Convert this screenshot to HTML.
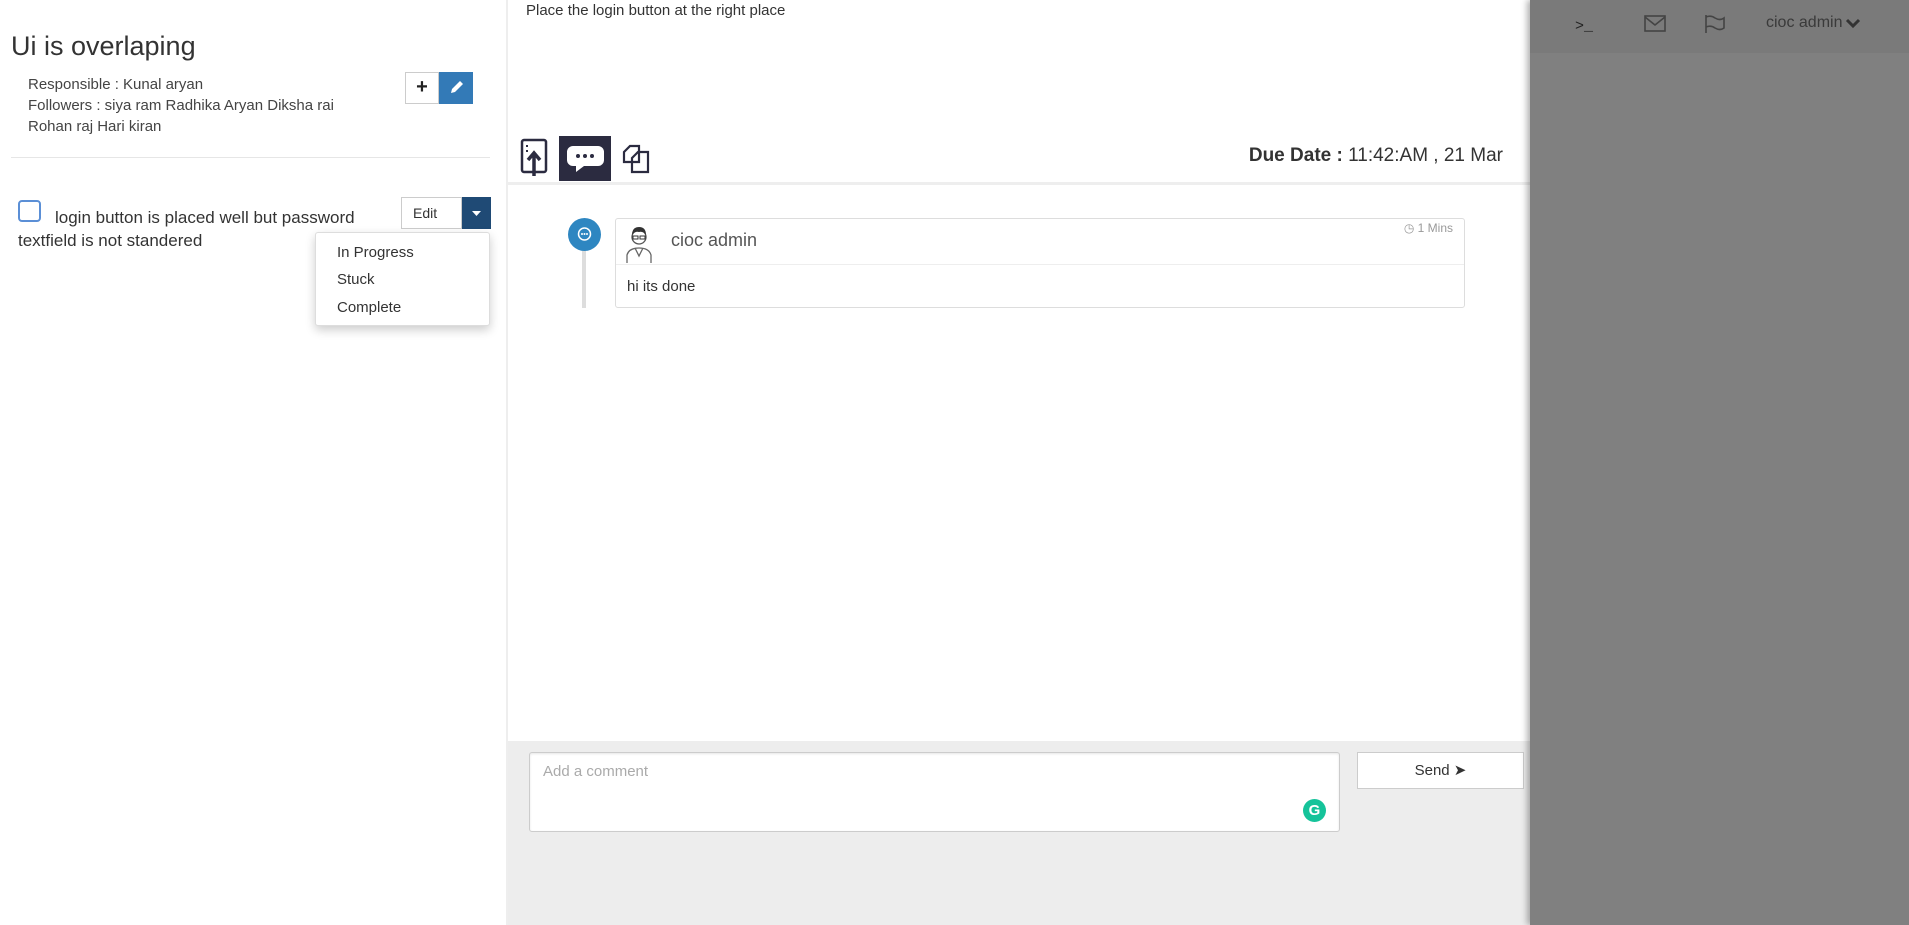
<!DOCTYPE html>
<html><head><meta charset="utf-8">
<style>
*{box-sizing:border-box;margin:0;padding:0}
body{width:1909px;height:925px;overflow:hidden;font-family:"Liberation Sans",sans-serif;background:#fff;position:relative;color:#333}
.abs{position:absolute}
</style></head><body>
<!-- left panel -->
<div class="abs" style="left:0;top:0;width:507px;height:925px;background:#fff"></div>
<div class="abs" style="left:11px;top:31px;font-size:27px;color:#333">Ui is overlaping</div>
<div class="abs" style="left:28px;top:74px;font-size:15px;line-height:21px;color:#444">Responsible : Kunal aryan<br>Followers : siya ram Radhika Aryan Diksha rai<br>Rohan raj Hari kiran</div>
<div class="abs" style="left:405px;top:72px;width:34px;height:32px;border:1px solid #ccc;background:#fff;text-align:center;font-size:20px;font-weight:bold;line-height:29px;color:#222">+</div>
<div class="abs" style="left:439px;top:72px;width:34px;height:32px;background:#337ab7;"><svg width="34" height="32"><path d="M12 21l1-4 8-8 3 3-8 8z" fill="#fff"/></svg></div>
<div class="abs" style="left:11px;top:157px;width:479px;height:1px;background:#e6e6e6"></div>
<div class="abs" style="left:18px;top:200px;width:23px;height:22px;border:2px solid #5b8fd6;border-radius:4px"></div>
<div class="abs" style="left:18px;top:206px;width:370px;font-size:17px;line-height:23px;color:#333;text-indent:37px">login button is placed well but password textfield is not standered</div>
<div class="abs" style="left:401px;top:197px;width:61px;height:32px;border:1px solid #ccc;background:#fff;font-size:14px;line-height:30px;padding-left:11px">Edit</div>
<div class="abs" style="left:462px;top:197px;width:29px;height:32px;background:#1f4a75"><svg width="29" height="32"><path d="M10 14h9l-4.5 5z" fill="#fff"/></svg></div>
<div class="abs" style="left:315px;top:232px;width:175px;height:94px;background:#fff;border:1px solid #ddd;border-radius:3px;box-shadow:0 4px 10px rgba(0,0,0,.2);font-size:15px;color:#333">
<div class="abs" style="left:21px;top:11px">In Progress</div>
<div class="abs" style="left:21px;top:38px">Stuck</div>
<div class="abs" style="left:21px;top:66px">Complete</div>
</div>
<div class="abs" style="left:506px;top:0;width:2px;height:925px;background:#eee"></div>
<!-- middle -->
<div class="abs" style="left:526px;top:2px;font-size:15px;color:#333">Place the login button at the right place</div>
<svg class="abs" style="left:518px;top:136px" width="140" height="46">
<rect x="4" y="4" width="24" height="32" rx="2" fill="none" stroke="#2b2b40" stroke-width="2.5"/>
<path d="M9 9v2M9 14v2" stroke="#2b2b40" stroke-width="2"/>
<path d="M16 40V18M10 24l6-7 6 7" stroke="#2b2b40" stroke-width="3.5" fill="none"/>
<rect x="41" y="0" width="52" height="45" fill="#2b2b40"/>
<path d="M55 10h25a6 6 0 0 1 6 6v8a6 6 0 0 1-6 6h-14l-8 6v-6h-3a6 6 0 0 1-6-6v-8a6 6 0 0 1 6-6z" fill="#fff"/>
<circle cx="60" cy="20" r="2" fill="#2b2b40"/><circle cx="67" cy="20" r="2" fill="#2b2b40"/><circle cx="74" cy="20" r="2" fill="#2b2b40"/>
<path d="M106 16l6-6h9v16h-15z M114 22l6-6h10v20h-16z" fill="#fff" stroke="#2b2b40" stroke-width="2.2"/>
</svg>
<div class="abs" style="right:406px;top:145px;font-size:19px;color:#333"><b>Due Date :</b> 11:42:AM , 21 Mar</div>
<div class="abs" style="left:508px;top:182px;width:1022px;height:3px;background:#eee"></div>
<div class="abs" style="left:582px;top:245px;width:4px;height:63px;background:#ddd"></div>
<div class="abs" style="left:568px;top:218px;width:33px;height:33px;border-radius:50%;background:#2e86c1"><svg width="33" height="33"><circle cx="16.5" cy="16" r="6" fill="none" stroke="#fff" stroke-width="1.5"/><circle cx="14" cy="16" r="1" fill="#fff"/><circle cx="16.5" cy="16" r="1" fill="#fff"/><circle cx="19" cy="16" r="1" fill="#fff"/></svg></div>
<div class="abs" style="left:615px;top:218px;width:850px;height:90px;border:1px solid #ddd;border-radius:3px;background:#fff">
<div class="abs" style="left:0;top:45px;width:848px;height:1px;background:#eee"></div>
<svg class="abs" style="left:8px;top:6px" width="30" height="38"><circle cx="15" cy="12" r="7" fill="none" stroke="#555" stroke-width="1.3"/><path d="M8 10q0-8 7-8q7 0 7 8q-3-4-7-3q-4-1-7 3z" fill="#333"/><rect x="9" y="11" width="5" height="3" fill="none" stroke="#333"/><rect x="16" y="11" width="5" height="3" fill="none" stroke="#333"/><path d="M3 38v-8q2-7 12-7q10 0 12 7v8M11 23l4 8 4-8" fill="none" stroke="#666" stroke-width="1.3"/></svg>
<div class="abs" style="left:55px;top:11px;font-size:18px;color:#555">cioc admin</div>
<div class="abs" style="right:11px;top:2px;font-size:12px;color:#999">◷ 1 Mins</div>
<div class="abs" style="left:11px;top:59px;font-size:15px;color:#333">hi its done</div>
</div>
<!-- bottom gray -->
<div class="abs" style="left:508px;top:741px;width:1022px;height:184px;background:#ededed"></div>
<div class="abs" style="left:529px;top:752px;width:811px;height:80px;background:#fff;border:1px solid #ccc;border-radius:3px;box-shadow:inset 0 1px 2px rgba(0,0,0,.1)">
<div class="abs" style="left:13px;top:10px;font-size:15px;color:#aaa">Add a comment</div>
<div class="abs" style="left:773px;top:46px;width:23px;height:23px;border-radius:50%;background:#15c39a;color:#fff;font-size:15px;font-weight:bold;text-align:center;line-height:23px">G</div>
</div>
<div class="abs" style="left:1357px;top:752px;width:167px;height:37px;background:#fff;border:1px solid #ccc;font-size:15px;text-align:center;line-height:35px;color:#333">Send ➤</div>
<!-- right overlay -->
<div class="abs" style="left:1530px;top:0;width:379px;height:925px;background:#808080;box-shadow:-3px 0 6px rgba(0,0,0,.3)"></div>
<div class="abs" style="left:1530px;top:0;width:379px;height:53px;background:#7a7a7a"></div>
<div class="abs" style="left:1575px;top:18px;font-size:15px;color:#222;font-family:'Liberation Mono',monospace">&gt;_</div>
<svg class="abs" style="left:1644px;top:15px" width="22" height="18"><rect x="1" y="1" width="20" height="15" fill="none" stroke="#444" stroke-width="1.6"/><path d="M1 2l10 8 10-8" fill="none" stroke="#444" stroke-width="1.6"/></svg>
<svg class="abs" style="left:1704px;top:14px" width="22" height="20"><path d="M2 1v18M2 3q5-2 9 1q5 3 9 0v10q-4 3-9 0q-4-3-9-1" fill="none" stroke="#444" stroke-width="1.6"/></svg>
<div class="abs" style="left:1766px;top:14px;font-size:16px;color:#3a3a3a">cioc admin</div>
<svg class="abs" style="left:1845px;top:17px" width="16" height="12"><path d="M2 3l6 6 6-6" fill="none" stroke="#333" stroke-width="3"/></svg>
</body></html>
